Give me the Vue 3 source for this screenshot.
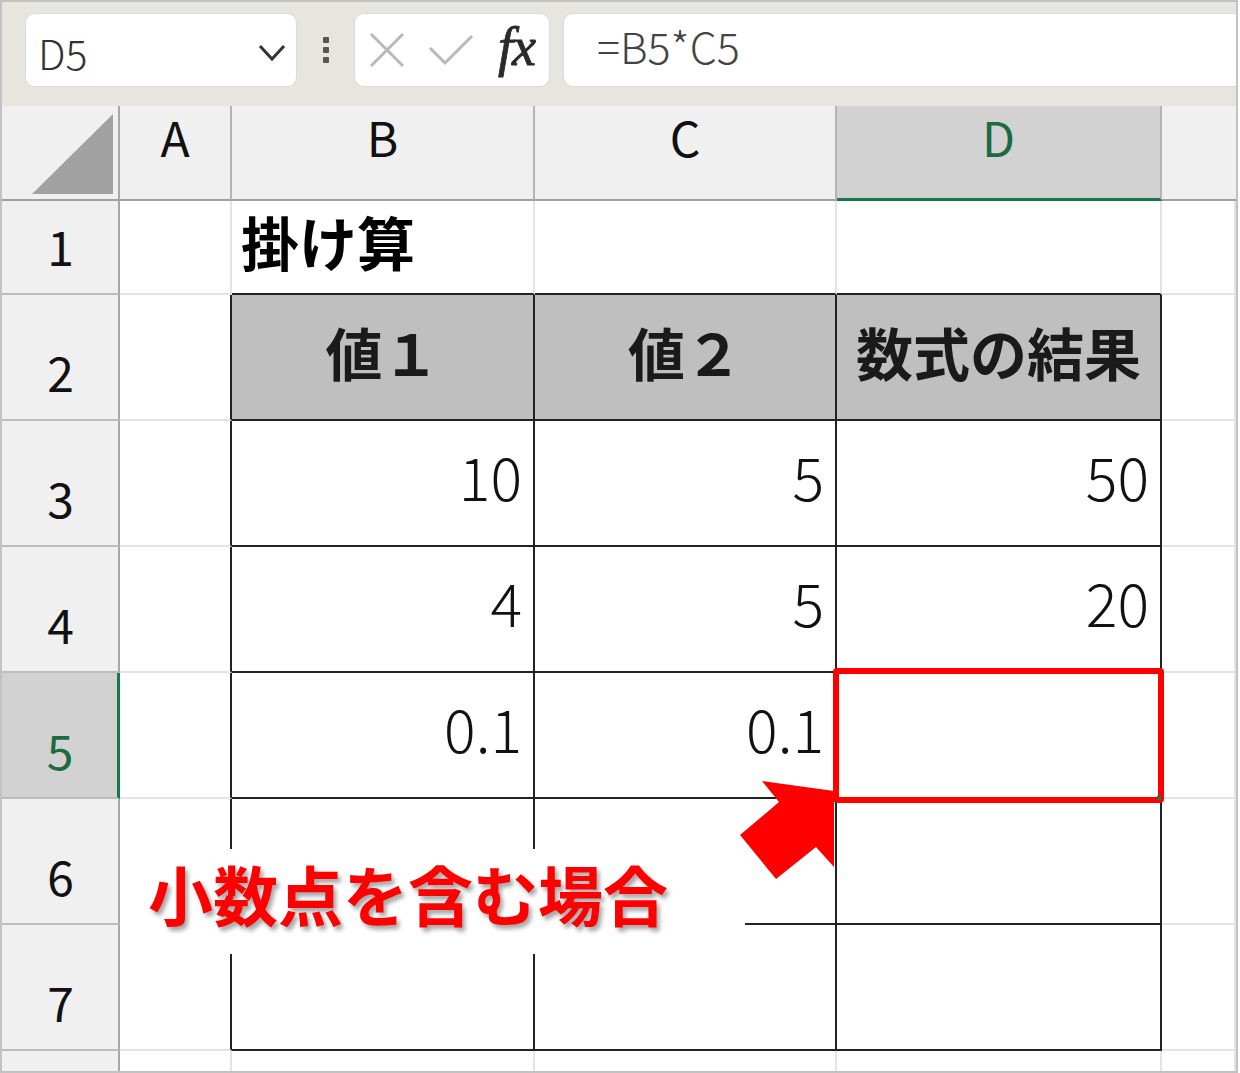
<script setup>
const cols = ['A', 'B', 'C', 'D']
const rows = [
  { n: 1, kind: 'title', cells: ['掛け算', '', ''] },
  { n: 2, kind: 'head', cells: ['値１', '値２', '数式の結果'] },
  { n: 3, kind: 'num', cells: ['10', '5', '50'] },
  { n: 4, kind: 'num', cells: ['4', '5', '20'] },
  { n: 5, kind: 'num', cells: ['0.1', '0.1', ''] },
  { n: 6, kind: 'num', cells: ['', '', ''] },
  { n: 7, kind: 'num', cells: ['', '', ''] }
]
</script>

<template>
  <div class="sheet">
    <div class="toolbar">
      <div class="namebox">
        <span class="name">D5</span>
        <svg class="chev" width="28" height="18" viewBox="0 0 28 18"><path d="M2 2 L14 15 L26 2" fill="none" stroke="#333" stroke-width="3" /></svg>
      </div>
      <div class="dots"><i></i><i></i><i></i></div>
      <div class="fxbox">
        <svg width="36" height="36" viewBox="0 0 36 36"><path d="M2 2 L34 34 M34 2 L2 34" fill="none" stroke="#b9b9b9" stroke-width="3" /></svg>
        <svg width="46" height="32" viewBox="0 0 46 32"><path d="M2 14 L17 29 L44 2" fill="none" stroke="#b9b9b9" stroke-width="3" /></svg>
        <span class="fx">fx</span>
      </div>
      <div class="formula">=B5*C5</div>
    </div>

    <div class="grid">
      <div class="corner">
        <svg width="82" height="81" viewBox="0 0 82 81"><path d="M0 80 L81 80 L81 0 Z" fill="#a2a2a2" /></svg>
      </div>
      <div v-for="c in cols" :key="c" class="colhead" :class="{ sel: c === 'D' }">{{ c }}</div>
      <div class="colhead last"></div>

      <template v-for="r in rows" :key="r.n">
        <div class="rowhead" :class="{ sel: r.n === 5 }">{{ r.n }}</div>
        <div class="cell" :class="{ tl: r.n > 1 }"></div>
        <div
          v-for="(v, i) in r.cells"
          :key="i"
          class="cell tb"
          :class="[r.kind, { tr: r.n > 1 }]"
        >{{ v }}</div>
        <div class="cell"></div>
      </template>

      <div class="rowhead tail"></div>
      <div class="cell tail"></div>
      <div class="cell tail"></div>
      <div class="cell tail"></div>
      <div class="cell tail"></div>
      <div class="cell tail"></div>
    </div>

    <div class="label">小数点を含む場合</div>
    <div class="frame"><i class="handle"></i></div>
    <svg class="arrow" width="110" height="110" viewBox="0 0 110 110">
      <path d="M24 3 L96 13 L96 89 L78 69 L38 101 L2 57 L41 24 Z" fill="#ff0000" />
    </svg>
  </div>
</template>

<style>
html, body { margin: 0; background: #fff; }
</style>

<style scoped>
.sheet {
  position: relative;
  box-sizing: border-box;
  width: 1238px;
  height: 1073px;
  border: 2px solid #c2c2c2;
  background: #fff;
  overflow: hidden;
  font-family: "Noto Sans CJK JP", "Noto Sans", sans-serif;
  color: #111;
}
.toolbar {
  height: 104px;
  box-sizing: border-box;
  background: #e6e6df;
  display: flex;
  align-items: flex-start;
  padding: 11px 0 0 23px;
}
.namebox, .fxbox, .formula {
  height: 74px;
  box-sizing: border-box;
  background: #fff;
  border: 1px solid #dcdcd6;
  border-radius: 10px;
  display: flex;
  align-items: center;
}
.namebox { width: 272px; padding: 0 10px 0 12px; justify-content: space-between; }
.chev { margin-top: 6px; }
.name { font-size: 41px; font-weight: 300; color: #333; margin-top: 5px; line-height: 1; }
.dots {
  width: 57px;
  height: 73px;
  display: flex;
  flex-direction: column;
  align-items: center;
  justify-content: center;
  gap: 4px;
}
.dots i { width: 6px; height: 6px; border-radius: 1px; background: #555; }
.fxbox { width: 196px; padding: 0 13px 0 14px; gap: 23px; position: relative; }
.fx {
  font-family: "Liberation Serif", serif;
  font-style: italic;
  font-weight: 400;
  font-size: 54px;
  line-height: 1;
  color: #2a2a2a;
  margin: -6px 0 0 1px;
  letter-spacing: -1px;
  -webkit-text-stroke: 0.9px #2a2a2a;
}
.formula {
  margin-left: 13px;
  flex: 1;
  padding: 0 0 11px 33px;
  border-right: 0;
  border-radius: 10px 0 0 10px;
  font-size: 43px;
  font-weight: 300;
  color: #444;
}

.grid {
  display: grid;
  grid-template-columns: 118px 112px 303px 302px 325px 1fr;
  grid-template-rows: 95px 94px repeat(6, 126px) 1fr;
  height: 965px;
}
.corner {
  background: #f0f0f0;
  border-right: 2px solid #a8a8a8;
  border-bottom: 2px solid #a0a0a0;
  box-sizing: border-box;
  display: flex;
  justify-content: flex-end;
  padding: 8px 4px 0 0;
}
.colhead {
  background: #f0f0f0;
  border-right: 2px solid #b4b4b4;
  border-bottom: 2px solid #a0a0a0;
  box-sizing: border-box;
  display: flex;
  justify-content: center;
  padding-top: 3px;
  font-size: 48px;
  line-height: 54px;
  font-weight: 400;
  color: #111;
}
.colhead.sel {
  background: #d2d2d2;
  color: #1d6b45;
  border-bottom: 3px solid #17794a;
}
.colhead.last { border-right: 0; }
.rowhead {
  background: #f0f0f0;
  border-right: 2px solid #a8a8a8;
  border-bottom: 2px solid #bdbdbd;
  box-sizing: border-box;
  display: flex;
  justify-content: center;
  align-items: flex-end;
  padding: 0 0 17px 1px;
  font-size: 48px;
  line-height: 62px;
  color: #111;
}
.rowhead.sel {
  background: #d2d2d2;
  color: #1d6b45;
  border-right: 3px solid #17794a;
}
.rowhead.tail { border-bottom: 0; }
.cell {
  box-sizing: border-box;
  border-right: 2px solid #e4e4e4;
  border-bottom: 2px solid #e4e4e4;
  min-width: 0;
  display: flex;
  align-items: center;
}
.cell.tail { border-bottom: 0; }
.cell.tl { border-right-color: #222; }
.cell.tr { border-right-color: #222; }
.cell.tb { border-bottom-color: #222; }
.title {
  font-size: 58px;
  font-weight: 700;
  padding: 0 0 12px 9px;
  color: #000;
}
.head {
  background: #bfbfbf;
  justify-content: center;
  padding-bottom: 12px;
  font-size: 57px;
  font-weight: 700;
  color: #1a1a1a;
}
.num {
  justify-content: flex-end;
  padding: 0 11px 16px 0;
  font-size: 59px;
  font-weight: 300;
  color: #111;
}

.label {
  position: absolute;
  left: 118px;
  top: 847px;
  width: 625px;
  height: 105px;
  box-sizing: border-box;
  background: #fff;
  padding: 0 0 18px 28px;
  display: flex;
  align-items: center;
  font-size: 65px;
  font-weight: 700;
  color: #ff0000;
  white-space: nowrap;
  text-shadow: 3px 4px 4px rgba(0, 0, 0, 0.35);
}
.frame {
  position: absolute;
  left: 831px;
  top: 666px;
  width: 331px;
  height: 135px;
  box-sizing: border-box;
  border: 6px solid #ff0000;
  border-radius: 4px;
}
.handle {
  position: absolute;
  right: -3px;
  bottom: -3px;
  width: 4px;
  height: 4px;
  background: #17794a;
}
.arrow {
  position: absolute;
  left: 736px;
  top: 776px;
}
</style>
